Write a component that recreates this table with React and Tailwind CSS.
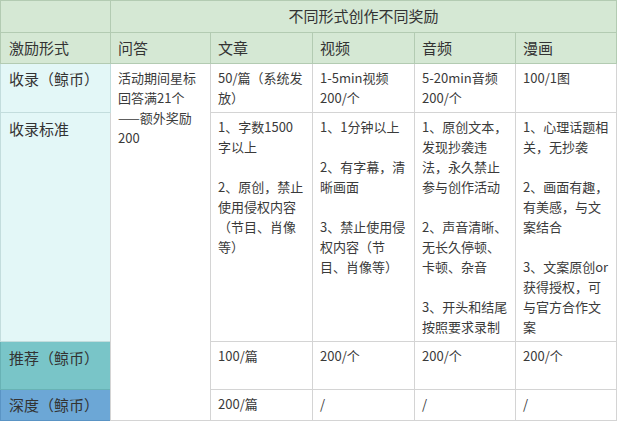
import React from 'react';

const cols = ['问答', '文章', '视频', '音频', '漫画'];

const standards = [
  ['1、字数1500字以上', '2、原创，禁止使用侵权内容（节目、肖像等）'],
  ['1、1分钟以上', '2、有字幕，清晰画面', '3、禁止使用侵权内容（节目、肖像等）'],
  ['1、原创文本，发现抄袭违法，永久禁止参与创作活动', '2、声音清晰、无长久停顿、卡顿、杂音', '3、开头和结尾按照要求录制'],
  ['1、心理话题相关，无抄袭', '2、画面有趣，有美感，与文案结合', '3、文案原创or获得授权，可与官方合作文案'],
];

const Cell = ({ children, className = '', ...rest }) => (
  <td {...rest} className={`border border-[#d4d4d4] px-[7px] pt-[4px] pb-[4px] align-top text-[13px] leading-[20px] text-[#3a3a3a] break-words ${className}`}>
    {children}
  </td>
);

const Label = ({ children, className = '' }) => (
  <td className={`border px-[8px] pt-[5px] align-top text-[15px] leading-[20px] text-[#333] ${className}`}>
    {children}
  </td>
);

export default function App() {
  return (
    <div className="w-[617px] h-[423px] bg-white" style={{ fontFamily: '"Noto Sans CJK SC", "Noto Sans", sans-serif' }}>
      <table className="w-[617px] table-fixed border-collapse">
        <colgroup>
          <col className="w-[110px]" />
          <col className="w-[100px]" />
          <col className="w-[102px]" />
          <col className="w-[102px]" />
          <col className="w-[101px]" />
          <col />
        </colgroup>
        <tbody>
          <tr className="h-[32px] bg-[#d5e8d4]">
            <td className="border border-[#b3cbb2]"></td>
            <td colSpan={5} className="border border-[#b3cbb2] text-center text-[15px] text-[#333]">
              不同形式创作不同奖励
            </td>
          </tr>
          <tr className="h-[31px] bg-[#d5e8d4]">
            <td className="border border-[#b3cbb2] px-[8px] text-[15px] text-[#333]">激励形式</td>
            {cols.map((c) => (
              <td key={c} className="border border-[#b3cbb2] px-[7px] text-[15px] text-[#333]">{c}</td>
            ))}
          </tr>
          <tr className="h-[49px]">
            <Label className="bg-[#e3f7f7] border-[#c3dddd]">收录（鲸币）</Label>
            <Cell rowSpan={4}>
              活动期间星标回答满21个——额外奖励200
            </Cell>
            <Cell>50/篇（系统发放）</Cell>
            <Cell>1-5min视频200/个</Cell>
            <Cell>5-20min音频200/个</Cell>
            <Cell>100/1图</Cell>
          </tr>
          <tr>
            <Label className="bg-[#e3f7f7] border-[#c3dddd] pt-[6px]">收录标准</Label>
            {standards.map((items, i) => (
              <Cell key={i}>
                <div className="flex flex-col gap-[20px]">
                  {items.map((t) => (
                    <p key={t}>{t}</p>
                  ))}
                </div>
              </Cell>
            ))}
          </tr>
          <tr className="h-[48px]">
            <Label className="bg-[#79c5c8] border-[#68b2b5] pt-[6px]">推荐（鲸币）</Label>
            <Cell>100/篇</Cell>
            <Cell>200/个</Cell>
            <Cell>200/个</Cell>
            <Cell>200/个</Cell>
          </tr>
          <tr className="h-[31px]">
            <Label className="bg-[#6ca7d6] border-[#5a94c4] pt-[4px]">深度（鲸币）</Label>
            <Cell>200/篇</Cell>
            <Cell>/</Cell>
            <Cell>/</Cell>
            <Cell>/</Cell>
          </tr>
        </tbody>
      </table>
    </div>
  );
}
